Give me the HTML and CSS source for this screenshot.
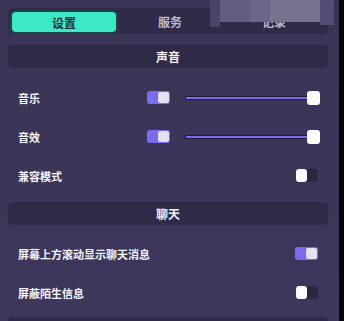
FILE: index.html
```html
<!DOCTYPE html>
<html lang="zh-CN">
<head>
    <meta charset="UTF-8">
    <meta name="viewport" content="width=device-width, initial-scale=1.0">
    <title>设置</title>
    <link rel="stylesheet" href="styles.css">
</head>
<body>
    <div class="screen">
        <div class="panel">
            <div class="tabs">
                <div class="tab active">设置</div>
                <div class="tab">服务</div>
                <div class="tab">记录</div>
            </div>

            <div class="section-title">声音</div>
            <div class="row">
                <span class="label">音乐</span>
                <div class="controls">
                    <span class="switch on"><span class="knob"></span></span>
                    <div class="slider"><span class="thumb"></span></div>
                </div>
            </div>
            <div class="row">
                <span class="label">音效</span>
                <div class="controls">
                    <span class="switch on"><span class="knob"></span></span>
                    <div class="slider"><span class="thumb"></span></div>
                </div>
            </div>
            <div class="row">
                <span class="label">兼容模式</span>
                <span class="switch off"><span class="knob"></span></span>
            </div>

            <div class="section-title">聊天</div>
            <div class="row">
                <span class="label">屏幕上方滚动显示聊天消息</span>
                <span class="switch on"><span class="knob"></span></span>
            </div>
            <div class="row">
                <span class="label">屏蔽陌生信息</span>
                <span class="switch off"><span class="knob"></span></span>
            </div>
            <div class="section-title next"></div>

            <!-- blurred area over the third tab -->
            <div class="mosaic">
                <span class="m1"></span>
                <span class="m2"></span>
                <span class="m3"></span>
                <span class="m4"></span>
                <span class="m5"></span>
            </div>
        </div>
        <div class="edge"></div>
    </div>
</body>
</html>
```

FILE: styles.css
```css
body {
    margin: 0;
    font-family: "Noto Sans CJK SC", "Noto Sans", sans-serif;
    background: #000;
}

.screen {
    display: flex;
    width: 344px;
    height: 321px;
    overflow: hidden;
}

.panel {
    position: relative;
    width: 339px;
    background: linear-gradient(#3a3556, #3c375b);
    padding: 8px 11px 0 8px;
    box-sizing: border-box;
}

.edge {
    flex: 1;
    background: #050408;
}

.tabs {
    display: flex;
    height: 26px;
    padding: 3px 2px;
    box-sizing: border-box;
    background: #2f2b49;
    border-radius: 4px;
}

.tab {
    flex: 1;
    display: flex;
    align-items: center;
    justify-content: center;
    font-size: 12px;
    font-weight: bold;
    color: #bdb9cf;
    border-radius: 6px;
}

.tab.active {
    background: #3fe9c8;
    color: #15303a;
    border: 2px solid #1c4548;
    margin-top: -1px;
    height: 20px;
}

.section-title {
    height: 23px;
    margin-top: 11px;
    margin-bottom: 10px;
    display: flex;
    align-items: center;
    justify-content: center;
    background: #2f2b47;
    border-radius: 4px;
    color: #f2f1f8;
    font-size: 12px;
    font-weight: bold;
}

.row + .section-title {
    margin-top: 7px;
    margin-bottom: 9px;
}

.section-title.next {
    margin-top: 5px;
}

.row {
    height: 39px;
    display: flex;
    align-items: center;
    justify-content: space-between;
    padding: 0 10px 0 10px;
}

.label {
    color: #f4f3f9;
    font-size: 11px;
    font-weight: bold;
}

.controls {
    display: flex;
    align-items: center;
    margin-right: -2px;
}

.switch {
    display: flex;
    width: 23px;
    height: 13px;
    border-radius: 3px;
    box-sizing: border-box;
}

.switch.on {
    background: #7a6cf1;
    justify-content: flex-end;
    padding: 1px;
}

.switch.on .knob {
    width: 11px;
    height: 11px;
    background: #e4e2f0;
    border-radius: 2px;
}

.switch.off {
    width: 22px;
    background: #2b2741;
    justify-content: flex-start;
}

.switch.off .knob {
    width: 11px;
    height: 13px;
    background: #fbfbfd;
    border-radius: 3px;
}

.slider {
    position: relative;
    width: 122px;
    height: 2px;
    margin-left: 15px;
    margin-right: 11px;
    background: #7a6cf1;
    border: 1px solid #1e1a38;
}

.thumb {
    position: absolute;
    right: -12px;
    top: -6px;
    width: 13px;
    height: 14px;
    background: #fdfdff;
    border-radius: 3px;
}

.mosaic {
    position: absolute;
    left: 210px;
    top: 0;
    width: 124px;
    height: 28px;
}

.mosaic span {
    position: absolute;
    top: 0;
    height: 22px;
}

.mosaic .m1 { left: 0; width: 10px; height: 27px; background: #4a4568; }
.mosaic .m2 { left: 10px; width: 30px; background: #625d7f; }
.mosaic .m3 { left: 40px; width: 20px; background: #6a6687; }
.mosaic .m4 { left: 60px; width: 50px; background: #77728f; }
.mosaic .m5 { left: 110px; width: 14px; height: 25px; background: #524d72; }
```
